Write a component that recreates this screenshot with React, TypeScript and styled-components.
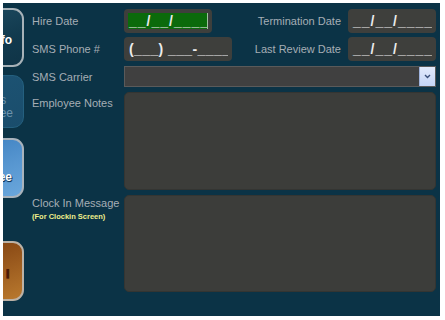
import React from "react";
import styled, { createGlobalStyle, css } from "styled-components";

const Global = createGlobalStyle`
  html, body { margin: 0; padding: 0; background: #ffffff; }
  body { font-family: "Liberation Sans", Arial, sans-serif; }
`;

const Frame = styled.div`
  width: 445px;
  height: 320px;
  box-sizing: border-box;
  padding: 3px 5px 4px 3px;
  background: #ffffff;
`;

const Panel = styled.div`
  height: 100%;
  background: #0b3346;
  overflow: hidden;
  display: flex;
  gap: 8px;
`;

const Sidebar = styled.div`
  width: 21px;
  flex: none;
  display: flex;
  flex-direction: column;
  padding-top: 5px;
`;

type TabKind = "info" | "faded" | "active" | "orange";

const tabStyles: Record<TabKind, ReturnType<typeof css>> = {
  info: css`
    background: linear-gradient(160deg, #1e4c62 0%, #123a4e 60%, #0f3447 100%);
    border: 2px solid #a7b2b8;
    color: #ffffff;
  `,
  faded: css`
    background: linear-gradient(160deg, #1d5474 0%, #1a4d6c 100%);
    border: 1px solid #24607f;
    color: #6d93ab;
    font-weight: normal;
  `,
  active: css`
    background: linear-gradient(160deg, #3a7dbe 0%, #5796d0 55%, #6aa7dc 100%);
    border: 2px solid #a9b3bc;
    color: #ffffff;
    text-shadow: 1px 1px 0 #123a60, 0 1px 1px #123a60;
  `,
  orange: css`
    background: linear-gradient(160deg, #7b3b0c 0%, #9a5a1e 50%, #b9792e 100%);
    border: 2px solid #bcb2a6;
    color: #4a1c08;
    font-size: 8px;
  `,
};

const Tab = styled.div<{ $kind: TabKind; $h: number; $mt: number; $pt: number }>`
  width: 72px;
  margin-left: -51px;
  height: ${(p) => p.$h}px;
  margin-top: ${(p) => p.$mt}px;
  box-sizing: border-box;
  border-radius: 11px;
  padding: ${(p) => p.$pt}px 10px 0 0;
  text-align: right;
  font-family: "Liberation Sans", Arial, sans-serif;
  font-size: 12px;
  font-weight: bold;
  line-height: 13px;
  white-space: pre;
  ${(p) => tabStyles[p.$kind]}
`;

const Form = styled.div`
  flex: 1;
  display: grid;
  grid-template-columns: 92px 1fr;
  grid-template-rows: 23px 24px 21px 98px 97px;
  row-gap: 5px;
  padding: 6px 4px 0 0;
  align-content: start;
`;

const Label = styled.div<{ $pt?: number }>`
  font-size: 11px;
  color: #a6aeb5;
  display: flex;
  flex-direction: column;
  justify-content: ${(p) => (p.$pt !== undefined ? "flex-start" : "center")};
  padding-top: ${(p) => p.$pt ?? 0}px;
  white-space: nowrap;
`;

const Note = styled.span`
  font-family: "Liberation Sans", Arial, sans-serif;
  font-size: 7.5px;
  font-weight: bold;
  color: #f0f08c;
  margin-top: 3px;
`;

const Line = styled.div`
  display: flex;
  align-items: flex-start;
`;

const Spacer = styled.div`
  flex: 1;
`;

const RightLabel = styled.div`
  font-size: 11px;
  line-height: 24px;
  color: #a6aeb5;
  margin-right: 7px;
  white-space: nowrap;
`;

const MaskBox = styled.div<{ $w: number }>`
  width: ${(p) => p.$w}px;
  height: 24px;
  flex: none;
  box-sizing: border-box;
  background: #3e3f3c;
  border-radius: 4px;
  padding: 4px;
  display: flex;
`;

const MaskInner = styled.div<{ $green?: boolean; $ls: number }>`
  flex: 1;
  background: ${(p) => (p.$green ? "#0b6a0b" : "transparent")};
  border-right: ${(p) => (p.$green ? "1px solid #9fc09f" : "none")};
  color: #ececec;
  font-size: 14px;
  font-weight: bold;
  line-height: 16px;
  display: flex;
  align-items: flex-end;
  padding-left: 1px;
  letter-spacing: ${(p) => p.$ls}px;
  overflow: hidden;
  white-space: pre;
`;

const SelectBox = styled.div`
  height: 21px;
  box-sizing: border-box;
  background: #404040;
  border: 1px solid #5a5a5a;
  display: flex;
  justify-content: flex-end;
`;

const SelectArrow = styled.div`
  width: 15px;
  height: 100%;
  background: linear-gradient(180deg, #e2eafb 0%, #c4d5f6 100%);
  border-left: 1px solid #9fb3dc;
  display: flex;
  align-items: center;
  justify-content: center;
`;

const AreaBox = styled.div`
  background: #3c3d3a;
  border: 1px solid #343532;
  border-radius: 5px;
`;

export default function App() {
  return (
    <>
      <Global />
      <Frame>
        <Panel>
          <Sidebar>
            <Tab $kind="info" $h={59} $mt={0} $pt={24}>Info</Tab>
            <Tab $kind="faded" $h={53} $mt={8} $pt={18}>{"Hours  \nEmployee"}</Tab>
            <Tab $kind="active" $h={60} $mt={10} $pt={31}>Employee</Tab>
            <Tab $kind="orange" $h={60} $mt={43} $pt={24}>▌</Tab>
          </Sidebar>
          <Form>
            <Label>Hire Date</Label>
            <Line>
              <MaskBox $w={88}>
                <MaskInner $green $ls={1}>__/__/____</MaskInner>
              </MaskBox>
              <Spacer />
              <RightLabel>Termination Date</RightLabel>
              <MaskBox $w={88}>
                <MaskInner $ls={1}>__/__/____</MaskInner>
              </MaskBox>
            </Line>

            <Label>SMS Phone #</Label>
            <Line>
              <MaskBox $w={108}>
                <MaskInner $ls={0.4}>(___) ___-____</MaskInner>
              </MaskBox>
              <Spacer />
              <RightLabel>Last Review Date</RightLabel>
              <MaskBox $w={88}>
                <MaskInner $ls={1}>__/__/____</MaskInner>
              </MaskBox>
            </Line>

            <Label>SMS Carrier</Label>
            <SelectBox>
              <SelectArrow>
                <svg width="7" height="5" viewBox="0 0 7 5">
                  <path d="M1 1 L3.5 3.5 L6 1" fill="none" stroke="#3a4f78" strokeWidth="1.4" />
                </svg>
              </SelectArrow>
            </SelectBox>

            <Label $pt={5}>Employee Notes</Label>
            <AreaBox />

            <Label $pt={2}>
              <span>Clock In Message</span>
              <Note>(For Clockin Screen)</Note>
            </Label>
            <AreaBox />
          </Form>
        </Panel>
      </Frame>
    </>
  );
}
